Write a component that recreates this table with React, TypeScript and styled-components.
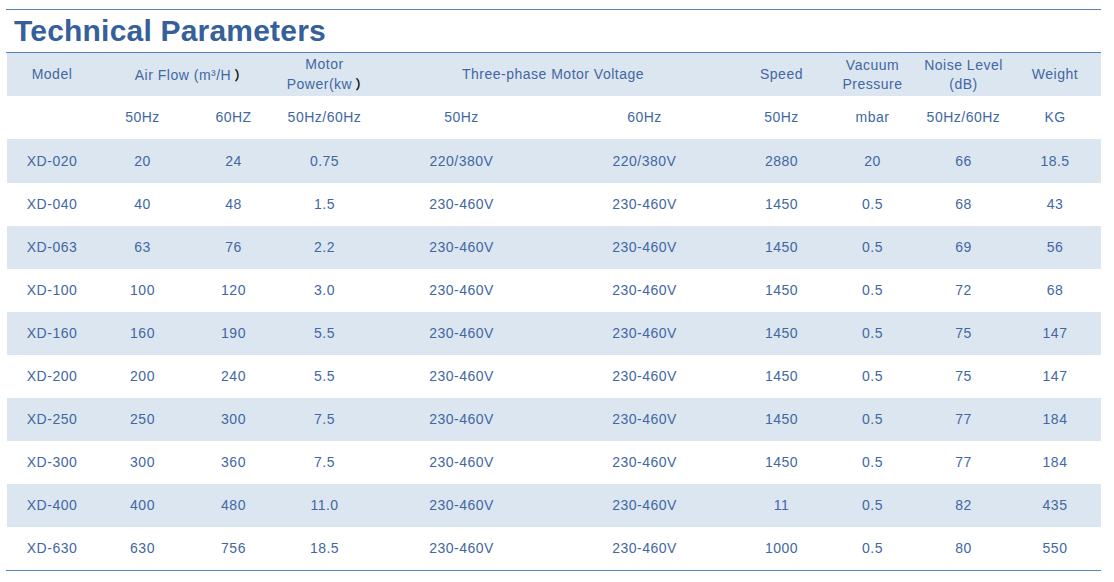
import React from "react";
import styled, { createGlobalStyle } from "styled-components";

const GlobalStyle = createGlobalStyle`
  html, body { margin: 0; padding: 0; background: #ffffff; }
  body { font-family: "Liberation Sans", Arial, sans-serif; }
`;

const Page = styled.div`
  padding: 9px 0 0 6px;
  width: 1095px;
`;

const Section = styled.section`
  border-top: 1px solid #5481bf;
`;

const Title = styled.h2`
  margin: 0;
  height: 42px;
  line-height: 42px;
  padding-left: 8px;
  font-size: 30px;
  font-weight: bold;
  color: #36609a;
  letter-spacing: 0.2px;
`;

const Table = styled.div`
  border-top: 1px solid #5481bf;
  border-bottom: 1px solid #5481bf;
  padding-left: 1px;
`;

const Row = styled.div<{ $shaded: boolean; $h: number }>`
  display: grid;
  grid-template-columns: 90px 91px 91px 91px 183px 183px 91px 91px 91px 92px;
  height: ${(p) => p.$h}px;
  background: ${(p) => (p.$shaded ? "#dce6f0" : "#ffffff")};
`;

const Cell = styled.div<{ $span?: number }>`
  grid-column: span ${(p) => p.$span ?? 1};
  display: flex;
  align-items: center;
  justify-content: center;
  text-align: center;
  font-size: 14px;
  line-height: 19px;
  letter-spacing: 0.5px;
  color: #4267a3;
  white-space: nowrap;
`;

const Paren = styled.span`
  color: #111111;
  font-family: "Noto Sans CJK SC", sans-serif;
  font-size: 13px;
  letter-spacing: 0;
  font-weight: bold;
  margin-left: 3px;
  margin-right: -6px;
`;

const rows: string[][] = [
  ["XD-020", "20", "24", "0.75", "220/380V", "220/380V", "2880", "20", "66", "18.5"],
  ["XD-040", "40", "48", "1.5", "230-460V", "230-460V", "1450", "0.5", "68", "43"],
  ["XD-063", "63", "76", "2.2", "230-460V", "230-460V", "1450", "0.5", "69", "56"],
  ["XD-100", "100", "120", "3.0", "230-460V", "230-460V", "1450", "0.5", "72", "68"],
  ["XD-160", "160", "190", "5.5", "230-460V", "230-460V", "1450", "0.5", "75", "147"],
  ["XD-200", "200", "240", "5.5", "230-460V", "230-460V", "1450", "0.5", "75", "147"],
  ["XD-250", "250", "300", "7.5", "230-460V", "230-460V", "1450", "0.5", "77", "184"],
  ["XD-300", "300", "360", "7.5", "230-460V", "230-460V", "1450", "0.5", "77", "184"],
  ["XD-400", "400", "480", "11.0", "230-460V", "230-460V", "11", "0.5", "82", "435"],
  ["XD-630", "630", "756", "18.5", "230-460V", "230-460V", "1000", "0.5", "80", "550"],
];

const units = ["", "50Hz", "60HZ", "50Hz/60Hz", "50Hz", "60Hz", "50Hz", "mbar", "50Hz/60Hz", "KG"];

export default function App() {
  return (
    <>
      <GlobalStyle />
      <Page>
        <Section>
          <Title>Technical Parameters</Title>
          <Table>
            <Row $shaded $h={43}>
              <Cell>Model</Cell>
              <Cell $span={2}>
                <span>
                  Air Flow (m³/H<Paren>）</Paren>
                </span>
              </Cell>
              <Cell>
                <span>
                  Motor
                  <br />
                  Power(kw<Paren>）</Paren>
                </span>
              </Cell>
              <Cell $span={2}>Three-phase Motor Voltage</Cell>
              <Cell>Speed</Cell>
              <Cell>
                <span>
                  Vacuum
                  <br />
                  Pressure
                </span>
              </Cell>
              <Cell>
                <span>
                  Noise Level
                  <br />
                  (dB)
                </span>
              </Cell>
              <Cell>Weight</Cell>
            </Row>
            <Row $shaded={false} $h={43}>
              {units.map((u, i) => (
                <Cell key={i}>{u}</Cell>
              ))}
            </Row>
            {rows.map((r, ri) => (
              <Row key={r[0]} $shaded={ri % 2 === 0} $h={ri === 0 ? 44 : 43}>
                {r.map((v, ci) => (
                  <Cell key={ci}>{v}</Cell>
                ))}
              </Row>
            ))}
          </Table>
        </Section>
      </Page>
    </>
  );
}
